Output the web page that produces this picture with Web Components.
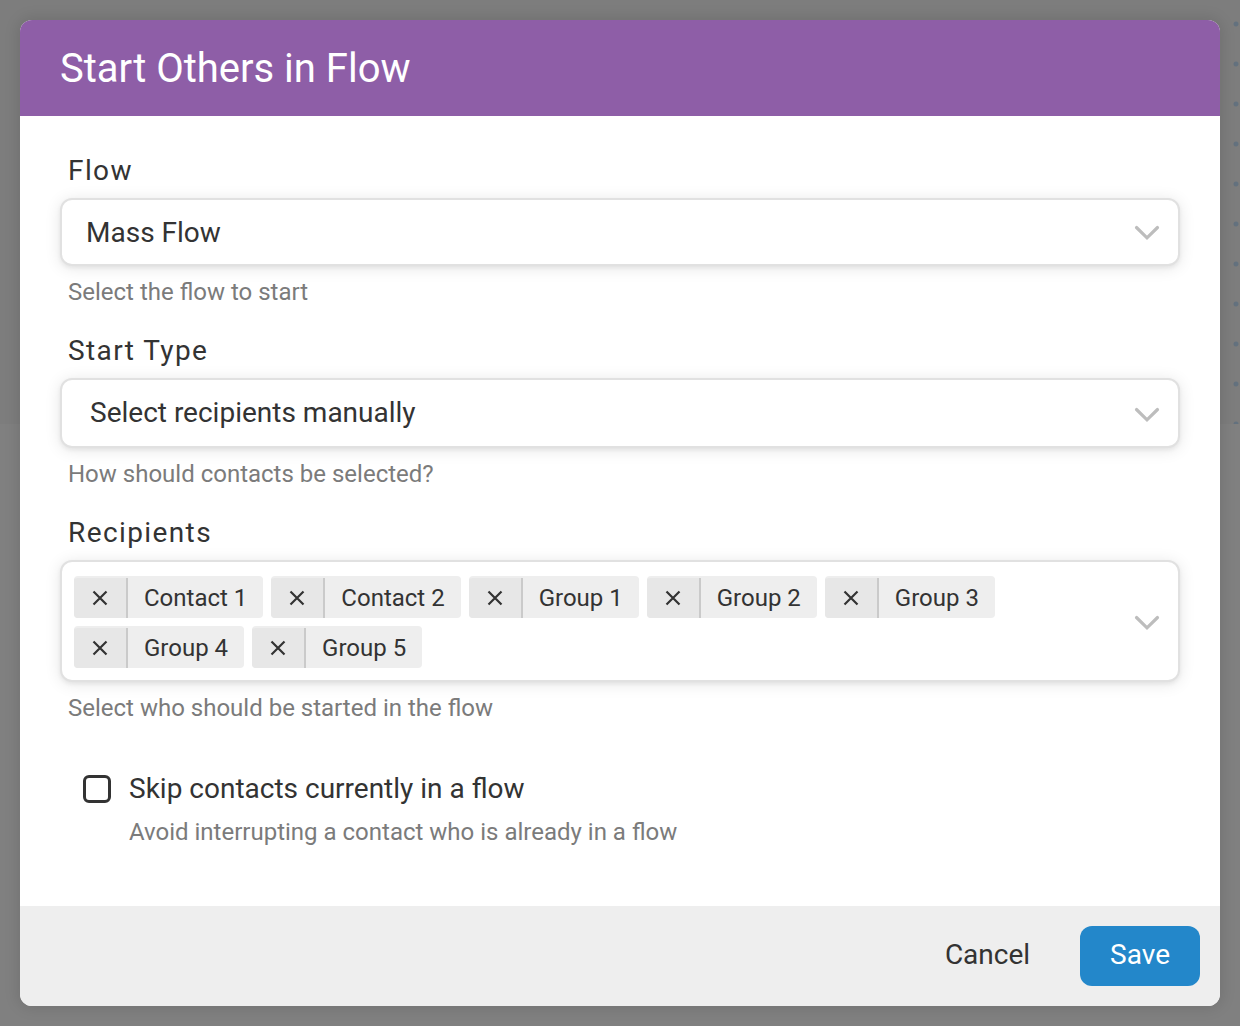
<!DOCTYPE html>
<html lang="en">
<head>
<meta charset="utf-8">
<meta name="viewport" content="width=device-width, initial-scale=1">
<title>Start Others in Flow</title>
<style>
  html, body { margin: 0; min-height: 100%; }
  body {
    font-family: Roboto, "Liberation Sans", sans-serif;
    font-size: 28px;
    line-height: 32px;
    color: #333;
    background: #808080;
    --help: #7b7b7b;
    --border: #e1e1e1;
  }
</style>
</head>
<body>

<flow-backdrop>
  <flow-dialog heading="Start Others in Flow">
    <select-field label="Flow" value="Mass Flow" help="Select the flow to start"></select-field>
    <select-field label="Start Type" value="Select recipients manually" help="How should contacts be selected?" roomy></select-field>
    <chips-field label="Recipients" help="Select who should be started in the flow">
      <recipient-chip>Contact 1</recipient-chip>
      <recipient-chip>Contact 2</recipient-chip>
      <recipient-chip>Group 1</recipient-chip>
      <recipient-chip>Group 2</recipient-chip>
      <recipient-chip>Group 3</recipient-chip>
      <recipient-chip>Group 4</recipient-chip>
      <recipient-chip>Group 5</recipient-chip>
    </chips-field>
    <check-field label="Skip contacts currently in a flow" help="Avoid interrupting a contact who is already in a flow"></check-field>
    <dialog-button slot="actions">Cancel</dialog-button>
    <dialog-button slot="actions" primary>Save</dialog-button>
  </flow-dialog>
</flow-backdrop>

<script>
const CHEVRON = `<svg class="chevron" width="26" height="16" viewBox="0 0 26 16" aria-hidden="true"><path d="M2.5 2.5 13 12.8 23.5 2.5" fill="none" stroke="#bdbdbd" stroke-width="3.2" stroke-linecap="round" stroke-linejoin="miter"/></svg>`;

const FIELD_STYLE = `
  :host { display: flex; flex-direction: column; margin-bottom: 25px; }
  .label { align-self: flex-start; padding-left: 8px; margin-bottom: 11px; letter-spacing: 0.05em; }
  .help { margin: 8px 0 0; padding-left: 8px; font-size: 24px; line-height: 36px; color: var(--help); }
  .box {
    border: 2px solid var(--border); border-radius: 12px; background: #fff;
    box-shadow: 0 2px 16px rgba(0,0,0,.1), 0 2px 4px rgba(0,0,0,.06);
  }`;

class BaseElement extends HTMLElement {
  connectedCallback() {
    if (this.shadowRoot) return;
    this.attachShadow({ mode: "open" }).innerHTML = this.render();
  }
  attr(name) { return this.getAttribute(name) || ""; }
}

customElements.define("flow-backdrop", class extends BaseElement {
  render() {
    return `<style>
      :host { display: grid; min-height: 100vh; }
      .canvas, .content { grid-area: 1 / 1; min-width: 0; }
      .canvas {
        height: 424px;
        background: radial-gradient(circle at 36px 24px, #63717e 2px, transparent 3px) 0 0 / 40px 40px, #7d7d7d;
      }
      .content { padding: 20px; }
    </style>
    <div class="canvas"></div><div class="content"><slot></slot></div>`;
  }
});

customElements.define("flow-dialog", class extends BaseElement {
  render() {
    return `<style>
      :host { display: block; }
      section { border-radius: 12px; overflow: hidden; background: #fff; box-shadow: 0 0 14px 3px rgba(0,0,0,.1); }
      header { background: #8e5ea7; color: #fff; padding: 25px 40px 23px; }
      h1 { margin: 0; font-size: 40px; line-height: 48px; font-weight: 400; }
      .body { padding: 39px 40px 56px; }
      footer { display: flex; justify-content: flex-end; gap: 20px; padding: 20px; background: #eee; }
    </style>
    <section role="dialog" aria-labelledby="heading">
      <header><h1 id="heading">${this.attr("heading")}</h1></header>
      <div class="body"><slot></slot></div>
      <footer><slot name="actions"></slot></footer>
    </section>`;
  }
});

customElements.define("select-field", class extends BaseElement {
  render() {
    return `<style>${FIELD_STYLE}
      .box { display: grid; align-items: center; }
      select, .chevron { grid-area: 1 / 1; }
      select {
        appearance: none; width: 100%; margin: 0; border: 0; border-radius: 10px; background: none;
        font: inherit; color: inherit; padding: 17px 64px 15px 24px;
      }
      :host([roomy]) select { padding: 17px 64px 17px 28px; }
      .chevron { justify-self: end; margin: 2px 18px 0 0; pointer-events: none; }
      :host([roomy]) .chevron { margin-top: 4px; }
    </style>
    <label class="label" for="control">${this.attr("label")}</label>
    <div class="box"><select id="control" aria-describedby="help"><option>${this.attr("value")}</option></select>${CHEVRON}</div>
    <p class="help" id="help">${this.attr("help")}</p>`;
  }
});

customElements.define("chips-field", class extends BaseElement {
  render() {
    return `<style>${FIELD_STYLE}
      .box { display: flex; align-items: center; }
      .chips { flex: 1; min-width: 0; display: flex; flex-wrap: wrap; gap: 8px; padding: 14px 12px 12px; }
      button { display: flex; border: 0; background: none; padding: 4px 18px 0; margin: 0; }
    </style>
    <span class="label" id="label">${this.attr("label")}</span>
    <div class="box" role="group" aria-labelledby="label" aria-describedby="help">
      <div class="chips"><slot></slot></div>
      <button type="button" aria-label="Open">${CHEVRON}</button>
    </div>
    <p class="help" id="help">${this.attr("help")}</p>`;
  }
});

customElements.define("recipient-chip", class extends BaseElement {
  render() {
    return `<style>
      :host {
        display: flex; box-sizing: border-box; height: 42px; border-top: 2px solid #eee; border-radius: 4px;
        background: #eee; overflow: hidden; font-size: 24px; line-height: 40px;
      }
      button {
        display: flex; align-items: center; justify-content: center; width: 54px; margin: 0; padding: 0;
        border: 0; border-right: 2px solid #cacaca; background: #e7e7e7; color: inherit;
      }
      .name { padding: 0 16px; white-space: nowrap; }
    </style>
    <button type="button" aria-label="Remove"><svg width="16" height="16" viewBox="0 0 16 16" aria-hidden="true"><path d="M1.5 1.5 14.5 14.5M14.5 1.5 1.5 14.5" fill="none" stroke="currentColor" stroke-width="2.2"/></svg></button>
    <span class="name"><slot></slot></span>`;
  }
});

customElements.define("check-field", class extends BaseElement {
  render() {
    return `<style>
      :host { display: grid; grid-template-columns: auto 1fr; column-gap: 18px; row-gap: 9px; align-items: center; padding: 22px 0 0 23px; }
      input { appearance: none; box-sizing: border-box; width: 28px; height: 28px; margin: 0; border: 3px solid #333; border-radius: 6px; }
      .help { grid-column: 2; margin: 0; font-size: 24px; line-height: 36px; color: var(--help); }
    </style>
    <input type="checkbox" id="control" aria-describedby="help">
    <label for="control">${this.attr("label")}</label>
    <p class="help" id="help">${this.attr("help")}</p>`;
  }
});

customElements.define("dialog-button", class extends BaseElement {
  render() {
    return `<style>
      :host { display: block; }
      button { margin: 0; border: 0; border-radius: 12px; padding: 13px 30px 15px; background: none; font: inherit; color: inherit; }
      :host([primary]) button { background: #2387ca; color: #fff; }
    </style>
    <button type="button"><slot></slot></button>`;
  }
});
</script>
</body>
</html>
